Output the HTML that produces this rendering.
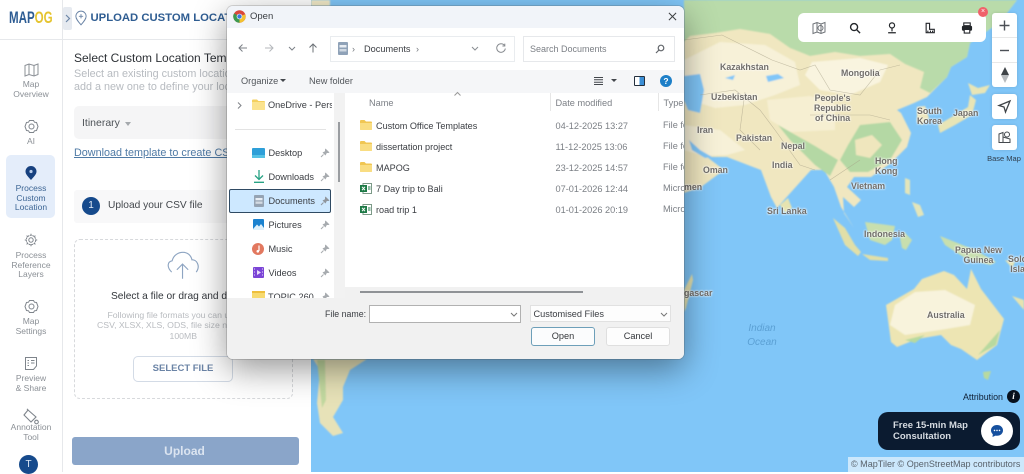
<!DOCTYPE html>
<html lang="en">
<head>
<meta charset="utf-8">
<title>MAPOG Upload Custom Location</title>
<style>
html,body{margin:0;padding:0;width:1024px;height:472px;overflow:hidden;background:#fff;font-family:"Liberation Sans",sans-serif}
*{box-sizing:border-box}
.a,.t{position:absolute}
.t{white-space:nowrap;line-height:12px}
.c{text-align:center}
.side{color:#8b9096;font-size:8.5px;line-height:9.7px;text-align:center;position:absolute;left:0;width:62px}
.ml{position:absolute;white-space:nowrap;text-align:center;font-size:8.8px;line-height:10px;font-weight:bold;color:#716e6a;text-shadow:0 0 2px #fff,0 0 2px #fff}
.d{font-size:9.2px;color:#3a3d42}
.g{color:#7b7f85}
svg{position:absolute;overflow:visible}
.btn{position:absolute;background:#fff;border-radius:3px;box-shadow:0 0 3px rgba(0,0,0,.12)}
</style>
</head>
<body>
<!-- MAP -->
<svg style="left:311px;top:0" width="713" height="472" viewBox="311 0 713 472">
<defs><filter id="b" x="-5%" y="-5%" width="110%" height="110%"><feGaussianBlur stdDeviation=".7"/></filter></defs>
<rect x="311" y="0" width="713" height="472" fill="#80c6f8"/>
<g filter="url(#b)">
<path d="M684 0H1017L1000 22 970 43 967 57 951 67 947 77 927 97 914 103 897 110 901 113 911 133 907 147 891 163 871 177 854 177 847 187 861 200 854 207 843 197 844 213 854 228 841 207 834 187 824 170 811 170 784 200 777 208 771 197 761 170 727 157 707 157 724 170 701 187 684 193Z" fill="#f0e7c0"/>
<path d="M684 0H1017L1000 22 970 43 967 57 951 67 947 77 930 93 920 88 924 72 905 64 890 54 860 56 835 52 810 56 790 48 770 34 740 29 715 33 690 36 684 42Z" fill="#b9dbaa"/>
<path d="M684 60 720 42 765 45 795 62 800 85 775 95 745 105 715 108 690 100 684 95ZM684 125 720 130 745 150 727 155 705 156 684 150Z" fill="#f7f1d8"/>
<path d="M812 62 860 58 888 65 880 82 850 95 820 90 805 75Z" fill="#f9f4df"/>
<path d="M767 100 810 96 835 104 835 130 790 132 770 120Z" fill="#f6efd2"/>
<path d="M848 145 860 125 890 122 902 140 890 160 868 172 850 172 840 160ZM778 125 815 146 838 160 830 176 815 165 790 140Z" fill="#b4d8a4"/>
<path d="M855 140 872 135 882 145 870 158 856 155Z" fill="#efe6bd"/>
<path d="M684 76 700 74 704 90 700 113 688 110 684 100Z" fill="#80c6f8"/>
<path d="M689 140 700 150 712 157 705 158 692 150Z" fill="#80c6f8"/>
<path d="M766 76 778 74 784 78 768 82ZM725 78 735 75 733 80Z" fill="#80c6f8"/>
<path d="M917 107 925 106 929 118 922 125 917 122Z" fill="#eee7bd"/>
<path d="M938 125 955 115 968 107 970 95 976 100 972 115 955 125 940 133ZM968 83 978 88 990 85 985 93 972 95Z" fill="#e8e5b6"/>
<path d="M905 178 910 180 910 195 905 193ZM912 202 920 205 924 215 918 217Z" fill="#e3e5ba"/>
<path d="M833 218 845 228 855 245 861 252 858 256 845 245ZM862 254 888 258 888 261 870 260Z" fill="#e1dfa8"/>
<path d="M865 222 895 226 892 240 885 245 870 240ZM900 238 904 232 912 240 906 250 902 248ZM940 236 975 250 996 262 990 265 965 258 945 245Z" fill="#c8dfae"/>
<path d="M886 305 914 289 922 279 944 271 954 275 967 289 971 269 981 289 1004 319 997 345 977 360 961 349 951 345 941 335 917 339 897 347 891 342Z" fill="#ede5b3"/>
<path d="M895 305 915 292 945 290 975 305 970 325 940 330 905 335 890 325Z" fill="#f8f3dc"/>
<path d="M905 340 925 335 915 343ZM978 355 1000 330 996 345ZM983 372 991 371 988 380 984 378Z" fill="#b8d99f"/>
<path d="M780 205 788 198 792 208 785 213ZM684 290 692 274 693 280 686 308 684 312ZM1005 260 1015 262 1012 268ZM1012 296 1024 300 1024 310Z" fill="#e6e3b0"/>
<path d="M313 359H367L350 370 343 387 343 400 333 417 343 433 333 436 320 423 317 403 320 370Z" fill="#e7e2b8"/>
<path d="M317 360 325 360 326 400 322 408Z" fill="#c2d9a0"/>
<path d="M311 0H330V6H311Z" fill="#f3ecc9"/>
</g>
<path d="M684 40 722 35 772 60 800 70 815 65 830 90 860 95 880 70 900 65M700 95 735 90 760 110 775 130 800 165 815 170M745 92 740 130 760 150M810 115 870 115 890 120M830 180 860 160" fill="none" stroke="#a59e85" stroke-width=".6" opacity=".6"/>
</svg>

<!-- MAP LABELS -->
<div class="ml" style="left:720px;top:62px">Kazakhstan</div>
<div class="ml" style="left:841px;top:68px">Mongolia</div>
<div class="ml" style="left:711px;top:92px">Uzbekistan</div>
<div class="ml" style="left:814px;top:93px">People's<br>Republic<br>of China</div>
<div class="ml" style="left:697px;top:125px">Iran</div>
<div class="ml" style="left:736px;top:133px">Pakistan</div>
<div class="ml" style="left:781px;top:141px">Nepal</div>
<div class="ml" style="left:772px;top:160px">India</div>
<div class="ml" style="left:703px;top:165px">Oman</div>
<div class="ml" style="left:684px;top:182px">men</div>
<div class="ml" style="left:917px;top:106px">South<br>Korea</div>
<div class="ml" style="left:953px;top:108px">Japan</div>
<div class="ml" style="left:875px;top:156px">Hong<br>Kong</div>
<div class="ml" style="left:851px;top:181px">Vietnam</div>
<div class="ml" style="left:767px;top:206px">Sri Lanka</div>
<div class="ml" style="left:864px;top:229px">Indonesia</div>
<div class="ml" style="left:955px;top:245px">Papua New<br>Guinea</div>
<div class="ml" style="left:1008px;top:254px">Solo<br>Isla</div>
<div class="ml" style="left:684px;top:288px">gascar</div>
<div class="ml" style="left:927px;top:310px">Australia</div>
<div class="t" style="left:746px;top:322px;width:32px;font:italic 10px/13.5px 'Liberation Sans',sans-serif;color:#5ba0d4;text-align:center;white-space:normal">Indian Ocean</div>

<!-- MAP TOOLS -->
<div class="a" style="left:798px;top:13px;width:188px;height:29px;background:#fff;border-radius:6px"></div>
<svg style="left:811px;top:21px" width="16" height="14" viewBox="0 0 16 14" fill="none" stroke="#6f7378" stroke-width="1"><path d="M2 3 6 1.500 10 3 14 1.500V11L10 12.500 6 11 2 12.500ZM6 1.500V11M10 3V12.500"/><circle cx="9.500" cy="7" r="2.500"/></svg>
<svg style="left:849px;top:22px" width="12" height="12" viewBox="0 0 13 13" fill="none" stroke="#23262a" stroke-width="1.500"><circle cx="5.500" cy="5.500" r="3.800"/><path d="M8.500 8.500 12 12"/></svg>
<svg style="left:886px;top:22px" width="12" height="12" viewBox="0 0 13 14" fill="none" stroke="#23262a" stroke-width="1.400"><circle cx="6.500" cy="4" r="3"/><path d="M6.500 7V11M2 12.500H11"/></svg>
<svg style="left:924px;top:22px" width="12" height="12" viewBox="0 0 13 14" fill="none" stroke="#23262a" stroke-width="1.300"><path d="M2 1.500V12.500H11.500V8.500H6V1.500Z"/><path d="M4 12V10M7 12V10M9.500 12V10"/></svg>
<svg style="left:961px;top:22px" width="12" height="12" viewBox="0 0 13 13"><path d="M3 1H10V4H3Z" fill="none" stroke="#23262a" stroke-width="1.200"/><rect x="1" y="4" width="11" height="5.500" rx="1.500" fill="#23262a"/><path d="M3.500 8H9.500V12H3.500Z" fill="#fff" stroke="#23262a" stroke-width="1.200"/></svg>
<div class="a" style="left:978px;top:7px;width:10px;height:10px;border-radius:50%;background:#f0626a;color:#fff;font-size:7px;line-height:10px;text-align:center">×</div>

<div class="btn" style="left:992px;top:13px;width:25px;height:74px"></div>
<div class="a" style="left:992px;top:37px;width:25px;height:1px;background:#e8e8e8"></div>
<div class="a" style="left:992px;top:62px;width:25px;height:1px;background:#e8e8e8"></div>
<svg style="left:998px;top:19px" width="13" height="13" viewBox="0 0 13 13" stroke="#4c5056" stroke-width="1.400"><path d="M1.500 6.500H11.500M6.500 1.500V11.500"/></svg>
<svg style="left:998px;top:44px" width="13" height="13" viewBox="0 0 13 13" stroke="#4c5056" stroke-width="1.400"><path d="M2 6.500H11"/></svg>
<svg style="left:1000px;top:67px" width="10" height="16" viewBox="0 0 10 16"><path d="M5 0 9 8H1Z" fill="#3f4347"/><path d="M5 16 9 8H1Z" fill="#b7babd"/></svg>
<div class="btn" style="left:992px;top:94px;width:25px;height:25px"></div>
<svg style="left:998px;top:100px" width="13" height="13" viewBox="0 0 13 13" fill="none" stroke="#3f4347" stroke-width="1.300"><path d="M12 1 1 5.500 6 7 7.500 12Z"/></svg>
<div class="btn" style="left:992px;top:125px;width:25px;height:25px"></div>
<svg style="left:998px;top:131px" width="13" height="13" viewBox="0 0 13 13" fill="none" stroke="#44484d" stroke-width="1"><path d="M1 3 5 1.500V11.500H1ZM5 6 12 8V11.500H5"/><circle cx="9" cy="3.500" r="2.500"/></svg>
<div class="t c" style="left:984px;top:154px;width:40px;font-size:7.500px;color:#2f3d4c;line-height:10px">Base Map</div>

<div class="t" style="left:963px;top:391px;font-size:8.900px;color:#0f2036">Attribution</div>
<div class="a" style="left:1007px;top:390px;width:13px;height:13px;border-radius:50%;background:#07101c;color:#fff;font:italic bold 9px/13px 'Liberation Serif',serif;text-align:center">i</div>
<div class="a" style="left:878px;top:412px;width:142px;height:38px;border-radius:10px;background:#0b1b30"></div>
<div class="t" style="left:893px;top:420px;font-size:9.500px;font-weight:bold;color:#d6dbe1;line-height:11px">Free 15-min Map<br>Consultation</div>
<div class="a" style="left:981px;top:416px;width:32px;height:30px;border-radius:50%;background:#fff"></div>
<svg style="left:990px;top:424px" width="14" height="14" viewBox="0 0 14 14"><path d="M7 1C3.500 1 1 3.400 1 6.400 1 8 1.700 9.300 2.800 10.200L2.500 13 5.500 11.600C6 11.700 6.500 11.800 7 11.800 10.500 11.800 13 9.400 13 6.400S10.500 1 7 1Z" fill="#16509e"/><circle cx="4.500" cy="6.400" r=".8" fill="#fff"/><circle cx="7" cy="6.400" r=".8" fill="#fff"/><circle cx="9.500" cy="6.400" r=".8" fill="#fff"/></svg>
<div class="t" style="left:848px;top:457px;width:176px;height:15px;background:rgba(255,255,255,.6);font-size:9.050px;line-height:15px;color:#59626b;padding-left:3px">© MapTiler © OpenStreetMap contributors</div>

<!-- LEFT PANEL -->
<div class="a" style="left:0;top:0;width:311px;height:472px;background:#fff"></div>
<div class="a" style="left:62px;top:0;width:1px;height:472px;background:#e6e8eb"></div>
<div class="a" style="left:0;top:39px;width:311px;height:1px;background:#e6e8eb"></div>
<div class="t" style="left:9px;top:9px;font-size:16.500px;line-height:19px;font-weight:bold;color:#2d5c93;transform:scaleX(.7);transform-origin:left">MAP<span style="color:#e5c42f">OG</span></div>
<div class="a" style="left:63px;top:7px;width:9px;height:23px;background:#e6eaf0;border-radius:2px"></div>
<svg style="left:64px;top:14px" width="7" height="9" viewBox="0 0 7 9" fill="none" stroke="#6d87a8" stroke-width="1.200"><path d="M2 1 5.500 4.500 2 8"/></svg>
<svg style="left:75px;top:10px" width="12" height="16" viewBox="0 0 14 18" fill="none" stroke="#6a84a6" stroke-width="1.100"><path d="M7 17C3.500 13 1 10 1 7A6 6 0 0 1 13 7C13 10 10.500 13 7 17Z"/><path d="M7 4.500V9.500M4.500 7H9.500"/></svg>
<div class="t" style="left:90.500px;top:11px;font-size:11.300px;line-height:14px;font-weight:bold;color:#2f5d92">UPLOAD CUSTOM LOCATION</div>

<!-- sidebar items -->
<svg style="left:24px;top:63px" width="15" height="14" viewBox="0 0 15 14" fill="none" stroke="#8b9096" stroke-width="1"><path d="M1 2.500 5 1 10 2.500 14 1V11.500L10 13 5 11.500 1 13ZM5 1V11.500M10 2.500V13"/></svg>
<div class="side" style="top:80px">Map<br>Overview</div>
<svg style="left:24px;top:119px" width="15" height="15" viewBox="0 0 15 15" fill="none" stroke="#7e848b" stroke-width="1"><path d="M5.500 1.500H9.500L10.500 3.200 12.500 3.500 14 7.500 12.500 11.500 10.500 11.800 9.500 13.500H5.500L4.500 11.800 2.500 11.500 1 7.500 2.500 3.500 4.500 3.200Z"/><circle cx="7.500" cy="7.500" r="2.500"/></svg>
<div class="side" style="top:137px">AI</div>
<div class="a" style="left:6px;top:155px;width:49px;height:63px;border-radius:5px;background:#e4edfa"></div>
<svg style="left:25px;top:166px" width="12" height="14" viewBox="0 0 12 14"><path d="M6 14C2.500 10 .5 8 .5 5.500A5.500 5.500 0 0 1 11.500 5.500C11.500 8 9.500 10 6 14Z" fill="#17417f"/><circle cx="6" cy="5.500" r="1.600" fill="#b9cdea"/></svg>
<div class="side" style="top:184px;color:#3c6594">Process<br>Custom<br>Location</div>
<svg style="left:24px;top:233px" width="14" height="14" viewBox="0 0 14 14" fill="none" stroke="#7e848b" stroke-width="1"><circle cx="7" cy="7" r="4.700" stroke-dasharray="2 .6"/><circle cx="7" cy="7" r="2.200"/><path d="M7 .8V2.500M7 11.500V13.200M.8 7H2.500M11.500 7H13.200M2.600 2.600 3.800 3.800M10.200 10.200 11.400 11.400M11.400 2.600 10.200 3.800M3.800 10.200 2.600 11.400"/></svg>
<div class="side" style="top:251px">Process<br>Reference<br>Layers</div>
<svg style="left:24px;top:299px" width="15" height="15" viewBox="0 0 15 15" fill="none" stroke="#7e848b" stroke-width="1"><path d="M5.500 1.500H9.500L10.500 3.200 12.500 3.500 14 7.500 12.500 11.500 10.500 11.800 9.500 13.500H5.500L4.500 11.800 2.500 11.500 1 7.500 2.500 3.500 4.500 3.200Z"/><circle cx="7.500" cy="7.500" r="2.500"/></svg>
<div class="side" style="top:317px">Map<br>Settings</div>
<svg style="left:24px;top:356px" width="14" height="15" viewBox="0 0 14 15" fill="none" stroke="#7e848b" stroke-width="1"><path d="M1.500 1.500H12.500V10L9.500 13.500H1.500Z"/><path d="M3.500 4.500H5M7 4.500H10.500M3.500 7H5M7 7H10.500M3.500 9.500H5"/></svg>
<div class="side" style="top:374px">Preview<br>&amp; Share</div>
<svg style="left:22px;top:408px" width="18" height="18" viewBox="0 0 18 18" fill="none" stroke="#7e848b" stroke-width="1.100"><path d="M6 2 14 9 9 14 2 7Z"/><path d="M6 2 5 .8"/><circle cx="14.500" cy="14" r="1.800"/></svg>
<div class="side" style="top:423px">Annotation<br>Tool</div>
<div class="a c" style="left:19px;top:455px;width:19px;height:19px;border-radius:50%;background:#164a8c;color:#dbe6f4;font-size:10px;line-height:19px">T</div>

<!-- panel content -->
<div class="t" style="left:74px;top:51px;font-size:12px;line-height:14px;color:#2d3136">Select Custom Location Template</div>
<div class="t" style="left:74px;top:68px;font-size:10.800px;line-height:13px;color:#b7bbc0">Select an existing custom location or<br>add a new one to define your location</div>
<div class="a" style="left:74px;top:106px;width:225px;height:33px;background:#f5f5f6;border-radius:5px"></div>
<div class="t" style="left:82px;top:117px;font-size:10.500px;color:#4d5257">Itinerary</div>
<div class="a" style="left:125px;top:122px;width:0;height:0;border-left:3.500px solid transparent;border-right:3.500px solid transparent;border-top:4px solid #a5a9ad"></div>
<div class="t" style="left:74px;top:146px;font-size:10.800px;line-height:14px;color:#4f7aa5;text-decoration:underline">Download template to create CSV file</div>
<div class="a" style="left:74px;top:190px;width:225px;height:33px;background:#f8f8f9;border-radius:3px"></div>
<div class="a c" style="left:82px;top:197px;width:18px;height:18px;border-radius:50%;background:#164a8c;color:#e3ecf7;font-size:10px;line-height:18px">1</div>
<div class="t" style="left:108px;top:199px;font-size:10.200px;line-height:14px;color:#43474c">Upload your CSV file</div>
<div class="a" style="left:74px;top:239px;width:219px;height:160px;border:1.500px dashed #d7d9dc;border-radius:6px"></div>
<svg style="left:166px;top:251px" width="34" height="29" viewBox="0 0 36 30" fill="none" stroke="#8ea5c2" stroke-width="1.200"><path d="M6 22C1 17 1 11 6.500 10 8 4 13 1 18 1 23 1 26.500 4.500 27.500 9 32 8.500 37 15 32 22"/><path d="M17.500 29V14M11.500 19.500 17.500 13.500 23.500 19.500"/></svg>
<div class="t" style="left:111px;top:291px;font-size:10.200px;color:#33373c">Select a file or drag and drop</div>
<div class="t" style="left:107.500px;top:309.500px;font-size:8.700px;line-height:10.500px;color:#b9bcc0">Following file formats you can upload:</div>
<div class="t" style="left:97px;top:320px;font-size:8.700px;line-height:10.500px;color:#b9bcc0">CSV, XLSX, XLS, ODS, file size not more than</div>
<div class="t" style="left:169.500px;top:330.500px;font-size:8.700px;line-height:10.500px;color:#b9bcc0">100MB</div>
<div class="a c" style="left:133px;top:356px;width:100px;height:26px;border:1px solid #d3dbe6;border-radius:5px;background:#fff;font-size:9.500px;font-weight:bold;line-height:24px;color:#6b84a6">SELECT FILE</div>
<div class="a c" style="left:72px;top:437px;width:227px;height:28px;border-radius:3px;background:#8aa5c9;color:#dbe4f0;font-size:12px;font-weight:bold;line-height:28px;padding-right:2px">Upload</div>

<!-- DIALOG -->
<div class="a" style="left:227px;top:6px;width:457px;height:353px;background:#fff;border-radius:6px;box-shadow:0 10px 34px rgba(0,0,0,.42),0 0 0 1px rgba(90,90,90,.22);overflow:hidden">
  <div class="a" style="left:0;top:0;width:457px;height:22px;background:#f1f4f9"></div>
  <div class="a" style="left:0;top:64px;width:457px;height:23px;background:#f5f6f8"></div>
  <div class="a" style="left:107px;top:87px;width:11px;height:205px;background:#f2f2f2"></div>
  <div class="a" style="left:0;top:292px;width:457px;height:61px;background:#f1f1f1"></div>
  <div class="a" style="left:118px;top:281px;width:339px;height:11px;background:#f1f1f1"></div>
</div>
<svg style="left:233px;top:10px" width="13" height="13" viewBox="0 0 13 13"><circle cx="6.500" cy="6.500" r="6.200" fill="#d9483b"/><path d="M6.500 6.500 1.100 3.400A6.200 6.200 0 0 0 6.500 12.700Z" fill="#3d9a50"/><path d="M6.500 6.500V12.700A6.200 6.200 0 0 0 12.200 4.200Z" fill="#f2c230"/><circle cx="6.500" cy="6.500" r="2.800" fill="#fff"/><circle cx="6.500" cy="6.500" r="2.200" fill="#3b78e0"/></svg>
<div class="t d" style="left:250px;top:11px;font-size:9.500px">Open</div>
<svg style="left:668px;top:12px" width="9" height="9" viewBox="0 0 10 10" stroke="#3c3e42" stroke-width="1.100"><path d="M1 1 9 9M9 1 1 9"/></svg>

<!-- nav -->
<svg style="left:238px;top:43px" width="10" height="10" viewBox="0 0 10 10" fill="none" stroke="#7c8187" stroke-width="1"><path d="M9 5H1M4.500 1.500 1 5 4.500 8.500"/></svg>
<svg style="left:264px;top:43px" width="10" height="10" viewBox="0 0 10 10" fill="none" stroke="#b4b7bb" stroke-width="1"><path d="M1 5H9M5.500 1.500 9 5 5.500 8.500"/></svg>
<svg style="left:288px;top:46px" width="8" height="5" viewBox="0 0 8 5" fill="none" stroke="#7c8187" stroke-width="1"><path d="M1 1 4 4 7 1"/></svg>
<svg style="left:308px;top:43px" width="10" height="10" viewBox="0 0 10 10" fill="none" stroke="#6b7076" stroke-width="1"><path d="M5 9.500V1M1.500 4.500 5 1 8.500 4.500"/></svg>
<div class="a" style="left:330px;top:36px;width:185px;height:26px;border:1px solid #e9ecef;background:#fff"></div>
<svg style="left:338px;top:42px" width="10" height="13" viewBox="0 0 10 13"><rect width="10" height="13" rx="1" fill="#8fa2b8"/><rect x="1.500" y="3" width="7" height="2.500" fill="#e8edf3"/><rect x="1.500" y="7" width="7" height="2.500" fill="#cfd8e2"/></svg>
<div class="t d" style="left:352px;top:43px;color:#73777c;font-size:9px">›</div>
<div class="t d" style="left:364px;top:43px;font-size:9.200px">Documents</div>
<div class="t d" style="left:416px;top:43px;color:#73777c;font-size:9px">›</div>
<svg style="left:471px;top:46px" width="8" height="5" viewBox="0 0 8 5" fill="none" stroke="#8a8e93" stroke-width="1"><path d="M1 1 4 4 7 1"/></svg>
<svg style="left:496px;top:43px" width="10" height="10" viewBox="0 0 10 10" fill="none" stroke="#888c91" stroke-width="1"><path d="M8.500 2.500A4.300 4.300 0 1 0 9.300 5.500M8.800 .6V3H6.400"/></svg>
<div class="a" style="left:523px;top:36px;width:152px;height:26px;border:1px solid #e6e8eb;background:#fff"></div>
<div class="t g" style="left:530px;top:43px;font-size:9px">Search Documents</div>
<svg style="left:655px;top:44px" width="10" height="10" viewBox="0 0 10 10" fill="none" stroke="#62666b" stroke-width="1.200"><circle cx="6" cy="4" r="2.800"/><path d="M4 6 1 9"/></svg>

<!-- toolbar -->
<div class="t d" style="left:241px;top:75px;font-size:9.200px;color:#52565b">Organize</div>
<div class="a" style="left:280px;top:79px;width:0;height:0;border-left:3px solid transparent;border-right:3px solid transparent;border-top:3.500px solid #43474c"></div>
<div class="t d" style="left:309px;top:75px;font-size:9.200px;color:#52565b">New folder</div>
<svg style="left:594px;top:77px" width="9" height="8" viewBox="0 0 9 8" stroke="#43474c"><path d="M0 .5H9M0 2.800H9M0 5.200H9M0 7.500H9"/></svg>
<div class="a" style="left:611px;top:79px;width:0;height:0;border-left:3px solid transparent;border-right:3px solid transparent;border-top:3.500px solid #43474c"></div>
<div class="a" style="left:634px;top:76px;width:11px;height:10px;border:1.200px solid #24303e;background:linear-gradient(90deg,#fff 50%,#3b8fd6 50%);border-radius:1px"></div>
<div class="a c" style="left:660px;top:75px;width:12px;height:12px;border-radius:50%;background:#1d7fc8;color:#fff;font-size:8.500px;font-weight:bold;line-height:12px">?</div>

<!-- nav tree -->
<svg style="left:237px;top:102px" width="5" height="7" viewBox="0 0 5 7" fill="none" stroke="#7e8287"><path d="M1 .5 4 3.500 1 6.500"/></svg>
<svg style="left:252px;top:99px" width="13" height="11" viewBox="0 0 13 11"><path d="M0 1.500Q0 .5 1 .5H5L6.500 2H12Q13 2 13 3V10Q13 11 12 11H1Q0 11 0 10Z" fill="#f4d05e"/><path d="M0 3H13V10Q13 11 12 11H1Q0 11 0 10Z" fill="#fbe38e"/></svg>
<div class="a" style="left:268px;top:99px;width:64px;height:12px;overflow:hidden;font-size:9.200px;line-height:12px;color:#3a3d42;white-space:nowrap">OneDrive - Personal</div>
<div class="a" style="left:235px;top:129px;width:91px;height:1px;background:#e3e3e3"></div>

<svg style="left:252px;top:148px" width="13" height="11" viewBox="0 0 13 11"><rect width="13" height="10" rx="1" fill="#2e9fd8"/><rect y="7" width="13" height="3" fill="#56c2e4"/></svg>
<div class="t d" style="left:268.500px;top:147px">Desktop</div>
<svg style="left:253px;top:170px" width="12" height="13" viewBox="0 0 12 13" fill="none" stroke="#27a284" stroke-width="1.300"><path d="M6 0V9M2 5.500 6 9.500 10 5.500M1 12.300H11"/></svg>
<div class="t d" style="left:268.500px;top:171px">Downloads</div>
<div class="a" style="left:229px;top:189px;width:102px;height:24px;border:1px solid #2f4a63;border-radius:2px;background:#cde8ff"></div>
<svg style="left:254px;top:195px" width="10" height="12" viewBox="0 0 10 12"><rect width="10" height="12" rx="1" fill="#95a3b3"/><rect x="1.500" y="3" width="7" height="2.300" fill="#e8edf3"/><rect x="1.500" y="6.500" width="7" height="2.300" fill="#d4dbe3"/></svg>
<div class="t d" style="left:268.500px;top:195px">Documents</div>
<svg style="left:253px;top:219px" width="11" height="11" viewBox="0 0 11 11"><rect width="11" height="11" rx="1" fill="#1b82cf"/><path d="M0 10 4 5.500 6 7.500 8 5 11 9V11H0Z" fill="#dff1fb"/></svg>
<div class="t d" style="left:268.500px;top:219px">Pictures</div>
<svg style="left:252px;top:243px" width="12" height="12" viewBox="0 0 12 12"><circle cx="6" cy="6" r="6" fill="#e2785f"/><path d="M7 2.500V8" stroke="#fff" stroke-width="1.200"/><circle cx="5.800" cy="8.300" r="1.300" fill="#fff"/></svg>
<div class="t d" style="left:268.500px;top:243px">Music</div>
<svg style="left:253px;top:267px" width="11" height="11" viewBox="0 0 11 11"><rect width="11" height="11" rx="1" fill="#7b45d6"/><path d="M4 3 8 5.500 4 8Z" fill="#e9dcfb"/><path d="M1 2H2M1 5H2M1 8H2M9 2H10M9 5H10M9 8H10" stroke="#e9dcfb"/></svg>
<div class="t d" style="left:268.500px;top:267px">Videos</div>
<div class="a" style="left:252px;top:291px;width:13px;height:7px;overflow:hidden"><div class="a" style="left:0;top:0;width:13px;height:7px;background:#f7da6f;border-top:2px solid #eebf3c"></div></div>
<div class="a" style="left:268px;top:291px;width:60px;height:7px;overflow:hidden;font-size:9.200px;line-height:12px;color:#3a3d42;white-space:nowrap">TOPIC 260</div>

<!-- pins -->
<svg style="left:320px;top:148px" width="10" height="10" viewBox="0 0 10 10" fill="#a7abaf"><path d="M5.500 .5 9.500 4.500 8.500 5 6.800 5 5.500 7.500 2.500 4.500 5 3.200 5 1.500ZM3.500 6.500 1 9"/><path d="M3.500 6.500 1 9" stroke="#a7abaf"/></svg>
<svg style="left:320px;top:172px" width="10" height="10" viewBox="0 0 10 10" fill="#a7abaf"><path d="M5.500 .5 9.500 4.500 8.500 5 6.800 5 5.500 7.500 2.500 4.500 5 3.200 5 1.500Z"/><path d="M3.500 6.500 1 9" stroke="#a7abaf"/></svg>
<svg style="left:320px;top:196px" width="10" height="10" viewBox="0 0 10 10" fill="#8f959c"><path d="M5.500 .5 9.500 4.500 8.500 5 6.800 5 5.500 7.500 2.500 4.500 5 3.200 5 1.500Z"/><path d="M3.500 6.500 1 9" stroke="#8f959c"/></svg>
<svg style="left:320px;top:220px" width="10" height="10" viewBox="0 0 10 10" fill="#a7abaf"><path d="M5.500 .5 9.500 4.500 8.500 5 6.800 5 5.500 7.500 2.500 4.500 5 3.200 5 1.500Z"/><path d="M3.500 6.500 1 9" stroke="#a7abaf"/></svg>
<svg style="left:320px;top:244px" width="10" height="10" viewBox="0 0 10 10" fill="#a7abaf"><path d="M5.500 .5 9.500 4.500 8.500 5 6.800 5 5.500 7.500 2.500 4.500 5 3.200 5 1.500Z"/><path d="M3.500 6.500 1 9" stroke="#a7abaf"/></svg>
<svg style="left:320px;top:268px" width="10" height="10" viewBox="0 0 10 10" fill="#a7abaf"><path d="M5.500 .5 9.500 4.500 8.500 5 6.800 5 5.500 7.500 2.500 4.500 5 3.200 5 1.500Z"/><path d="M3.500 6.500 1 9" stroke="#a7abaf"/></svg>
<svg style="left:320px;top:292px" width="10" height="6" viewBox="0 0 10 6" fill="#a7abaf"><path d="M5.500 .5 9.500 4.500 8.500 5 6.800 5 6.300 6H3.500L2.500 4.500 5 3.200 5 1.500Z"/></svg>

<div class="a" style="left:338px;top:122px;width:2px;height:60px;background:#9a9da1"></div>

<!-- file list -->
<div class="t g" style="left:369px;top:97px;font-size:9.200px">Name</div>
<svg style="left:454px;top:92px" width="7" height="4" viewBox="0 0 7 4" fill="none" stroke="#999"><path d="M.5 3.500 3.500 .5 6.500 3.500"/></svg>
<div class="a" style="left:550px;top:93px;width:1px;height:18px;background:#e6e6e6"></div>
<div class="t g" style="left:555.500px;top:97px;font-size:9.200px">Date modified</div>
<div class="a" style="left:658px;top:93px;width:1px;height:18px;background:#e6e6e6"></div>
<div class="t g" style="left:663.500px;top:97px;font-size:9.200px">Type</div>

<svg style="left:360px;top:120px" width="12" height="10" viewBox="0 0 12 10"><path d="M0 1Q0 0 1 0H4.500L6 1.500H11Q12 1.500 12 2.500V9Q12 10 11 10H1Q0 10 0 9Z" fill="#f0c653"/><path d="M0 3H12V9Q12 10 11 10H1Q0 10 0 9Z" fill="#f9dd82"/></svg>
<svg style="left:360px;top:141px" width="12" height="10" viewBox="0 0 12 10"><path d="M0 1Q0 0 1 0H4.500L6 1.500H11Q12 1.500 12 2.500V9Q12 10 11 10H1Q0 10 0 9Z" fill="#f0c653"/><path d="M0 3H12V9Q12 10 11 10H1Q0 10 0 9Z" fill="#f9dd82"/></svg>
<svg style="left:360px;top:162px" width="12" height="10" viewBox="0 0 12 10"><path d="M0 1Q0 0 1 0H4.500L6 1.500H11Q12 1.500 12 2.500V9Q12 10 11 10H1Q0 10 0 9Z" fill="#f0c653"/><path d="M0 3H12V9Q12 10 11 10H1Q0 10 0 9Z" fill="#f9dd82"/></svg>
<svg style="left:360px;top:183px" width="12" height="11" viewBox="0 0 12 11"><rect x="3" y=".5" width="8.500" height="10" fill="#fff" stroke="#7c9a88"/><rect y="2" width="7" height="7" fill="#1d7a46"/><path d="M2 3.800 5 7.200M5 3.800 2 7.200" stroke="#fff"/><path d="M8 4H10.500M8 6H10.500" stroke="#1d7a46"/></svg>
<svg style="left:360px;top:204px" width="12" height="11" viewBox="0 0 12 11"><rect x="3" y=".5" width="8.500" height="10" fill="#fff" stroke="#7c9a88"/><rect y="2" width="7" height="7" fill="#1d7a46"/><path d="M2 3.800 5 7.200M5 3.800 2 7.200" stroke="#fff"/><path d="M8 4H10.500M8 6H10.500" stroke="#1d7a46"/></svg>
<div class="t d" style="left:376px;top:120px;font-size:9.100px">Custom Office Templates</div>
<div class="t d" style="left:376px;top:141px;font-size:9.100px">dissertation project</div>
<div class="t d" style="left:376px;top:162px;font-size:9.100px">MAPOG</div>
<div class="t d" style="left:376px;top:183px;font-size:9.100px">7 Day trip to Bali</div>
<div class="t d" style="left:376px;top:204px;font-size:9.100px">road trip 1</div>
<div class="t g" style="left:555.500px;top:120px;font-size:9.200px">04-12-2025 13:27</div>
<div class="t g" style="left:555.500px;top:141px;font-size:9.200px">11-12-2025 13:06</div>
<div class="t g" style="left:555.500px;top:162px;font-size:9.200px">23-12-2025 14:57</div>
<div class="t g" style="left:555.500px;top:183px;font-size:9.200px">07-01-2026 12:44</div>
<div class="t g" style="left:555.500px;top:204px;font-size:9.200px">01-01-2026 20:19</div>
<div class="a" style="left:663px;top:115px;width:21px;height:105px;overflow:hidden;font-size:9.200px;line-height:21px;color:#7b7f85;white-space:nowrap">File folder<br>File folder<br>File folder<br>Microsoft<br>Microsoft</div>

<!-- bottom -->
<div class="a" style="left:360px;top:291px;width:223px;height:2px;background:#8f9296"></div>
<div class="t d" style="left:325px;top:308px;font-size:8.800px">File name:</div>
<div class="a" style="left:369px;top:305px;width:152px;height:18px;background:#fff;border:1px solid #b1b1b1"></div>
<svg style="left:510px;top:312px" width="8" height="5" viewBox="0 0 8 5" fill="none" stroke="#777" stroke-width="1"><path d="M1 1 4 4 7 1"/></svg>
<div class="a" style="left:530px;top:305px;width:141px;height:17px;background:#fdfdfd;border:1px solid #e1e1e1"></div>
<div class="t d" style="left:533.500px;top:308px;font-size:9.200px">Customised Files</div>
<svg style="left:660px;top:312px" width="8" height="5" viewBox="0 0 8 5" fill="none" stroke="#777" stroke-width="1"><path d="M1 1 4 4 7 1"/></svg>
<div class="a c" style="left:531px;top:327px;width:64px;height:19px;background:#fbfcfd;border:1.300px solid #6d9fb9;border-radius:3px;font-size:9.200px;line-height:17px;color:#33363a">Open</div>
<div class="a c" style="left:606px;top:327px;width:64px;height:19px;background:#fdfdfd;border:1px solid #dfdfdf;border-radius:3px;font-size:9.200px;line-height:17px;color:#33363a">Cancel</div>
</body>
</html>
